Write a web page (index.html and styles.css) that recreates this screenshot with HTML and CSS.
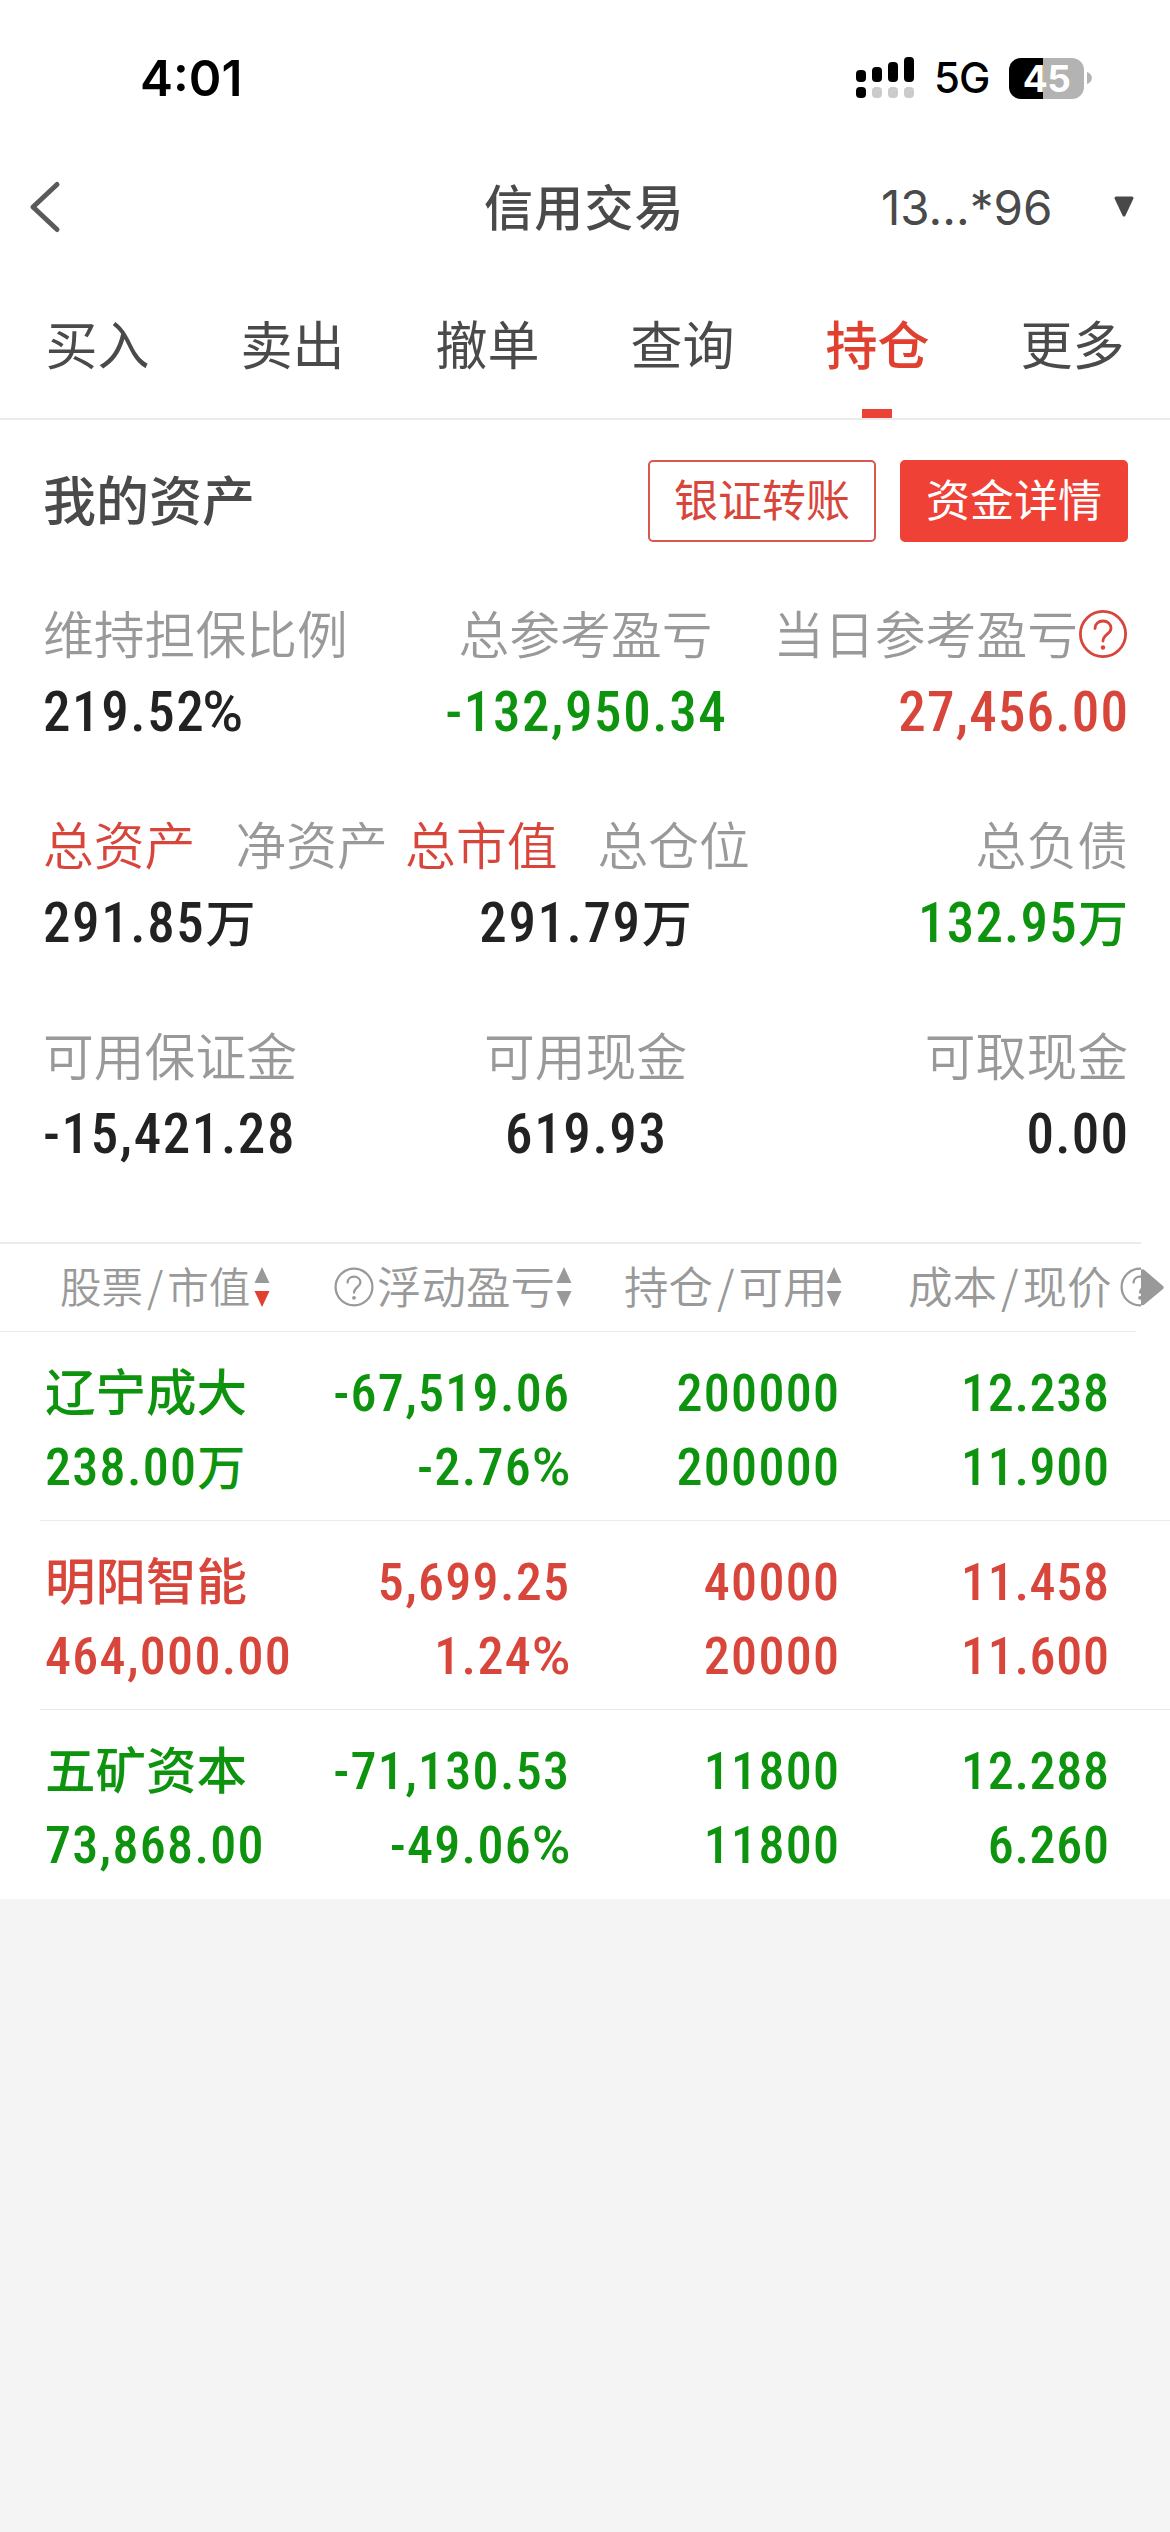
FILE: index.html
```html
<!DOCTYPE html>
<html lang="zh-CN">
<head>
    <meta charset="UTF-8">
    <meta name="viewport" content="width=device-width, initial-scale=1.0">
    <title>信用交易</title>
    <link rel="stylesheet" href="styles.css">
</head>
<body>
    <div class="status-bar">
        <span class="time">4:01</span>
        <svg class="signal" width="58" height="42" viewBox="0 0 58 42">
            <rect x="0" y="13" width="10" height="12" rx="4"/>
            <rect x="16" y="10" width="10" height="15" rx="4"/>
            <rect x="32" y="5" width="10" height="20" rx="4"/>
            <rect x="48" y="0" width="10" height="25" rx="4"/>
            <rect x="0" y="30" width="10" height="11" rx="4"/>
            <g fill="#cbcbcb">
                <rect x="16" y="30" width="10" height="11" rx="4"/>
                <rect x="32" y="30" width="10" height="11" rx="4"/>
                <rect x="48" y="30" width="10" height="11" rx="4"/>
            </g>
        </svg>
        <span class="network">5G</span>
        <div class="battery"><span>45</span></div>
        <svg class="battery-tip" width="5" height="12" viewBox="0 0 5 12"><path d="M0 0C6.500 2 6.500 10 0 12Z" fill="#b3b3b3"/></svg>
    </div>

    <div class="nav">
        <svg class="back" width="34" height="54" viewBox="0 0 34 54"><path d="M29 4.500L5 27l24 22.500" fill="none" stroke="#5a5a5a" stroke-width="5" stroke-linecap="round" stroke-linejoin="round"/></svg>
        <h1>信用交易</h1>
        <div class="account">
            <span>13...*96</span>
            <svg width="22" height="22" viewBox="0 0 22 22"><path d="M3 2H19L11 19Z" fill="#484848" stroke="#484848" stroke-width="3" stroke-linejoin="round"/></svg>
        </div>
    </div>

    <div class="tabs">
        <div class="tab">买入</div>
        <div class="tab">卖出</div>
        <div class="tab">撤单</div>
        <div class="tab">查询</div>
        <div class="tab active">持仓</div>
        <div class="tab">更多</div>
    </div>

    <div class="assets">
        <div class="assets-head">
            <h2>我的资产</h2>
            <div class="buttons">
                <div class="btn">银证转账</div>
                <div class="btn btn-fill">资金详情</div>
            </div>
        </div>

        <div class="asset-row">
            <div class="cell">
                <div class="label">维持担保比例</div>
                <div class="value">219.52<em>%</em></div>
            </div>
            <div class="cell">
                <div class="label">总参考盈亏</div>
                <div class="value green">-132,950.34</div>
            </div>
            <div class="cell">
                <div class="label">当日参考盈亏<svg class="help" width="50" height="50" viewBox="0 0 50 50"><g fill="none" stroke="#d8453b" stroke-width="2.800" stroke-linecap="round"><circle cx="25" cy="25" r="22.600"/><path d="M17 19.500c0-4.500 3.500-7.500 8-7.500s8 3 8 7.300c0 5.700-8 6.200-8 12.700"/></g><circle cx="25" cy="38.500" r="2.200" fill="#d8453b"/></svg></div>
                <div class="value red">27,456.00</div>
            </div>
        </div>

        <div class="asset-row">
            <div class="cell">
                <div class="label switch"><span class="red">总资产</span><span>净资产</span></div>
                <div class="value">291.85<i>万</i></div>
            </div>
            <div class="cell">
                <div class="label switch"><span class="red">总市值</span><span>总仓位</span></div>
                <div class="value">291.79<i>万</i></div>
            </div>
            <div class="cell">
                <div class="label">总负债</div>
                <div class="value green">132.95<i>万</i></div>
            </div>
        </div>

        <div class="asset-row">
            <div class="cell">
                <div class="label">可用保证金</div>
                <div class="value">-15,421.28</div>
            </div>
            <div class="cell">
                <div class="label">可用现金</div>
                <div class="value">619.93</div>
            </div>
            <div class="cell">
                <div class="label">可取现金</div>
                <div class="value">0.00</div>
            </div>
        </div>
    </div>

    <div class="list-head">
        <div class="col col-1 small">
            <span>股票<b>/</b>市值</span>
            <svg class="sort" width="16" height="40" viewBox="0 0 16 40"><path d="M8 0l7.500 16H.5Z" fill="#999"/><path d="M8 40L.5 24h15Z" fill="#e0402f"/></svg>
        </div>
        <div class="col col-2">
            <svg class="help-small" width="40" height="40" viewBox="0 0 50 50"><g fill="none" stroke="#999" stroke-width="2.800" stroke-linecap="round"><circle cx="25" cy="25" r="23"/><path d="M17 19.500c0-4.500 3.500-7.500 8-7.500s8 3 8 7.300c0 5.700-8 6.200-8 12.700"/></g><circle cx="25" cy="38.500" r="2.400" fill="#999"/></svg>
            <span>浮动盈亏</span>
            <svg class="sort" width="16" height="40" viewBox="0 0 16 40"><path d="M8 0l7.500 16H.5ZM8 40L.5 24h15Z" fill="#999"/></svg>
        </div>
        <div class="col col-3">
            <span>持仓<b>/</b>可用</span>
            <svg class="sort" width="16" height="40" viewBox="0 0 16 40"><path d="M8 0l7.500 16H.5ZM8 40L.5 24h15Z" fill="#999"/></svg>
        </div>
        <div class="col col-4">
            <span>成本<b>/</b>现价</span>
            <svg class="help-cut" width="21" height="40" viewBox="0 0 26.250 50"><g fill="none" stroke="#999" stroke-width="2.800" stroke-linecap="round"><circle cx="25" cy="25" r="23"/><path d="M17 19.500c0-4.500 3.500-7.500 8-7.500s8 3 8 7.300c0 5.700-8 6.200-8 12.700"/></g><circle cx="25" cy="38.500" r="2.400" fill="#999"/></svg>
            <svg class="more" width="23" height="40" viewBox="0 0 23 40"><path d="M0 2.500q2-1 4 1L22 19q1.500 1.500 0 3L4 37q-2 2-4 1Z" fill="#999"/></svg>
        </div>
    </div>

    <div class="list">
        <div class="stock green">
            <div class="stock-col name"><span class="cn">辽宁成大</span><span>238.00<i>万</i></span></div>
            <div class="stock-col profit"><span>-67,519.06</span><span>-2.76<em>%</em></span></div>
            <div class="stock-col amount"><span>200000</span><span>200000</span></div>
            <div class="stock-col price"><span>12.238</span><span>11.900</span></div>
        </div>
        <div class="stock red">
            <div class="stock-col name"><span class="cn">明阳智能</span><span>464,000.00</span></div>
            <div class="stock-col profit"><span>5,699.25</span><span>1.24<em>%</em></span></div>
            <div class="stock-col amount"><span>40000</span><span>20000</span></div>
            <div class="stock-col price"><span>11.458</span><span>11.600</span></div>
        </div>
        <div class="stock green">
            <div class="stock-col name"><span class="cn">五矿资本</span><span>73,868.00</span></div>
            <div class="stock-col profit"><span>-71,130.53</span><span>-49.06<em>%</em></span></div>
            <div class="stock-col amount"><span>11800</span><span>11800</span></div>
            <div class="stock-col price"><span>12.288</span><span>6.260</span></div>
        </div>
    </div>
</body>
</html>
```

FILE: styles.css
```css
* {
    box-sizing: border-box;
}
body {
    margin: 0;
    width: 1170px;
    height: 2532px;
    overflow: hidden;
    background: #f4f4f4;
    font-family: "Noto Sans CJK SC", sans-serif;
    color: #4a4a4a;
    white-space: nowrap;
}
h1, h2 {
    margin: 0;
    font-weight: 500;
}
i, b, em {
    font-style: normal;
    font-weight: inherit;
}
/* 百分号用正常宽度 */
em {
    font-stretch: 100%;
    letter-spacing: 0;
}
.green {
    color: #0d930d;
}
.red {
    color: #d8453b;
}

/* 状态栏 */
.status-bar {
    display: flex;
    align-items: center;
    height: 156px;
    padding-left: 140px;
    background: #fff;
    color: #000;
    font-family: Inter, sans-serif;
}
.time {
    width: 716px;
    font-size: 49.500px;
    font-weight: 600;
    line-height: 60px;
}
.network {
    width: 75px;
    margin-left: 20px;
    font-size: 42px;
    font-weight: 500;
    line-height: 42px;
    letter-spacing: -1px;
}
.battery {
    width: 75px;
    height: 41px;
    border-radius: 12px;
    background: linear-gradient(to right, #000 34px, #b3b3b3 34px);
    color: #fff;
    font-size: 37px;
    font-weight: 700;
    line-height: 41px;
    letter-spacing: -.5px;
    text-align: center;
}
.battery-tip {
    margin-left: 3px;
}

/* 导航 */
.nav {
    display: flex;
    align-items: center;
    height: 104px;
    padding: 0 35px 2px 28px;
    background: #fff;
}
.nav h1 {
    margin-left: 422px;
    font-size: 49px;
    line-height: 66px;
    padding-bottom: 4px;
    letter-spacing: 1.200px;
}
.account {
    display: flex;
    align-items: center;
    justify-content: space-between;
    width: 254px;
    margin-left: auto;
    font-family: Inter, sans-serif;
    font-size: 47.500px;
}

/* 菜单 */
.tabs {
    display: flex;
    height: 160px;
    background: #fff;
    border-bottom: 2px solid #ebebeb;
}
.tab {
    flex: 1;
    position: relative;
    font-size: 52px;
    line-height: 166px;
    text-align: center;
}
.tab.active {
    color: #e0402f;
    font-weight: 500;
}
.tab.active::after {
    content: "";
    position: absolute;
    left: 82px;
    bottom: 0;
    width: 30px;
    height: 9px;
    background: #ea4236;
}

/* 我的资产 */
.assets {
    height: 822px;
    padding: 40px 42px 0 43px;
    background: #fff;
}
.assets-head {
    display: flex;
    justify-content: space-between;
    align-items: center;
    height: 82px;
    margin-bottom: 50px;
}
.assets-head h2 {
    font-size: 53px;
    line-height: 76px;
    padding-bottom: 6px;
}
.buttons {
    display: flex;
    gap: 24px;
}
.btn {
    width: 228px;
    height: 82px;
    border: 2px solid #d8584f;
    border-radius: 5px;
    color: #d8453b;
    font-size: 44px;
    line-height: 73px;
    text-align: center;
}
.btn-fill {
    background: #ef4135;
    border-color: #ef4135;
    color: #fff;
}
.asset-row {
    display: flex;
    height: 211px;
}
.cell {
    width: 362px;
    display: flex;
    flex-direction: column;
    align-items: center;
}
.cell:first-child {
    align-items: flex-start;
}
.cell:last-child {
    align-items: flex-end;
}
.label {
    display: flex;
    align-items: center;
    height: 80px;
    color: #999;
    font-size: 50.800px;
    font-weight: 350;
    line-height: 80px;
}
.help {
    margin-top: 3px;
}
.switch {
    gap: 40px;
}
.cell:nth-child(2) .switch {
    margin-left: -16px;
}
.value {
    margin-right: -1.600px;
    font-family: Roboto, "Noto Sans CJK SC", sans-serif;
    font-size: 55px;
    font-weight: 500;
    font-stretch: 87%;
    line-height: 80px;
    letter-spacing: 1.600px;
}
.cell:last-child .value {
    margin-right: -1.200px;
    letter-spacing: 1.200px;
}
.value:not(.green):not(.red) {
    color: #222;
}
.value i {
    font-size: 50px;
}
.value em {
    margin-left: -3px;
}

/* 持仓列表 */
.list-head {
    display: flex;
    height: 90px;
    padding: 2px 0;
    background:
        linear-gradient(#ebebeb, #ebebeb) 0 0 / 1141px 2px no-repeat,
        linear-gradient(#ebebeb, #ebebeb) 0 89px / 1136px 1px no-repeat,
        #fff;
    color: #999;
    font-size: 44.500px;
    font-weight: 350;
    line-height: 82px;
}
.col {
    display: flex;
    align-items: center;
}
.col span {
    padding-bottom: 4px;
}
.col b {
    margin: 0 4px;
}
.col-1 {
    width: 334px;
    padding-left: 60px;
}
.col-1.small {
    font-size: 41.500px;
}
.col-2 {
    width: 290px;
}
.col-3 {
    width: 284px;
}
.sort {
    margin-left: 4px;
}
.col-2 .sort {
    margin-left: 1px;
}
.col-3 .sort {
    margin-left: -1px;
}
.help-small {
    margin-right: 3px;
}
.help-cut {
    margin-left: 9px;
}
.list {
    background: #fff;
    height: 567px;
}
.stock {
    display: flex;
    height: 189px;
    margin-left: 40px;
    padding-top: 25px;
    border-bottom: 1px solid #ebebeb;
    font-family: Roboto, "Noto Sans CJK SC", sans-serif;
    font-size: 52px;
    font-weight: 500;
    font-stretch: 87%;
}
.stock:last-child {
    border-bottom: 0;
}
.stock-col {
    display: flex;
    flex-direction: column;
    align-items: flex-end;
    line-height: 74px;
}
.stock-col span {
    height: 74px;
    margin-right: -1.300px;
    letter-spacing: 1.300px;
}
.stock-col i {
    font-size: 48px;
}
.stock-col .cn {
    font-size: 50.500px;
    letter-spacing: 0;
}
.name {
    width: 240px;
    padding-left: 5px;
    align-items: flex-start;
}
.profit {
    width: 289px;
}
.amount {
    width: 270px;
}
.price {
    width: 270px;
}
.stock .price span {
    margin-right: -.700px;
    letter-spacing: .700px;
}
```
